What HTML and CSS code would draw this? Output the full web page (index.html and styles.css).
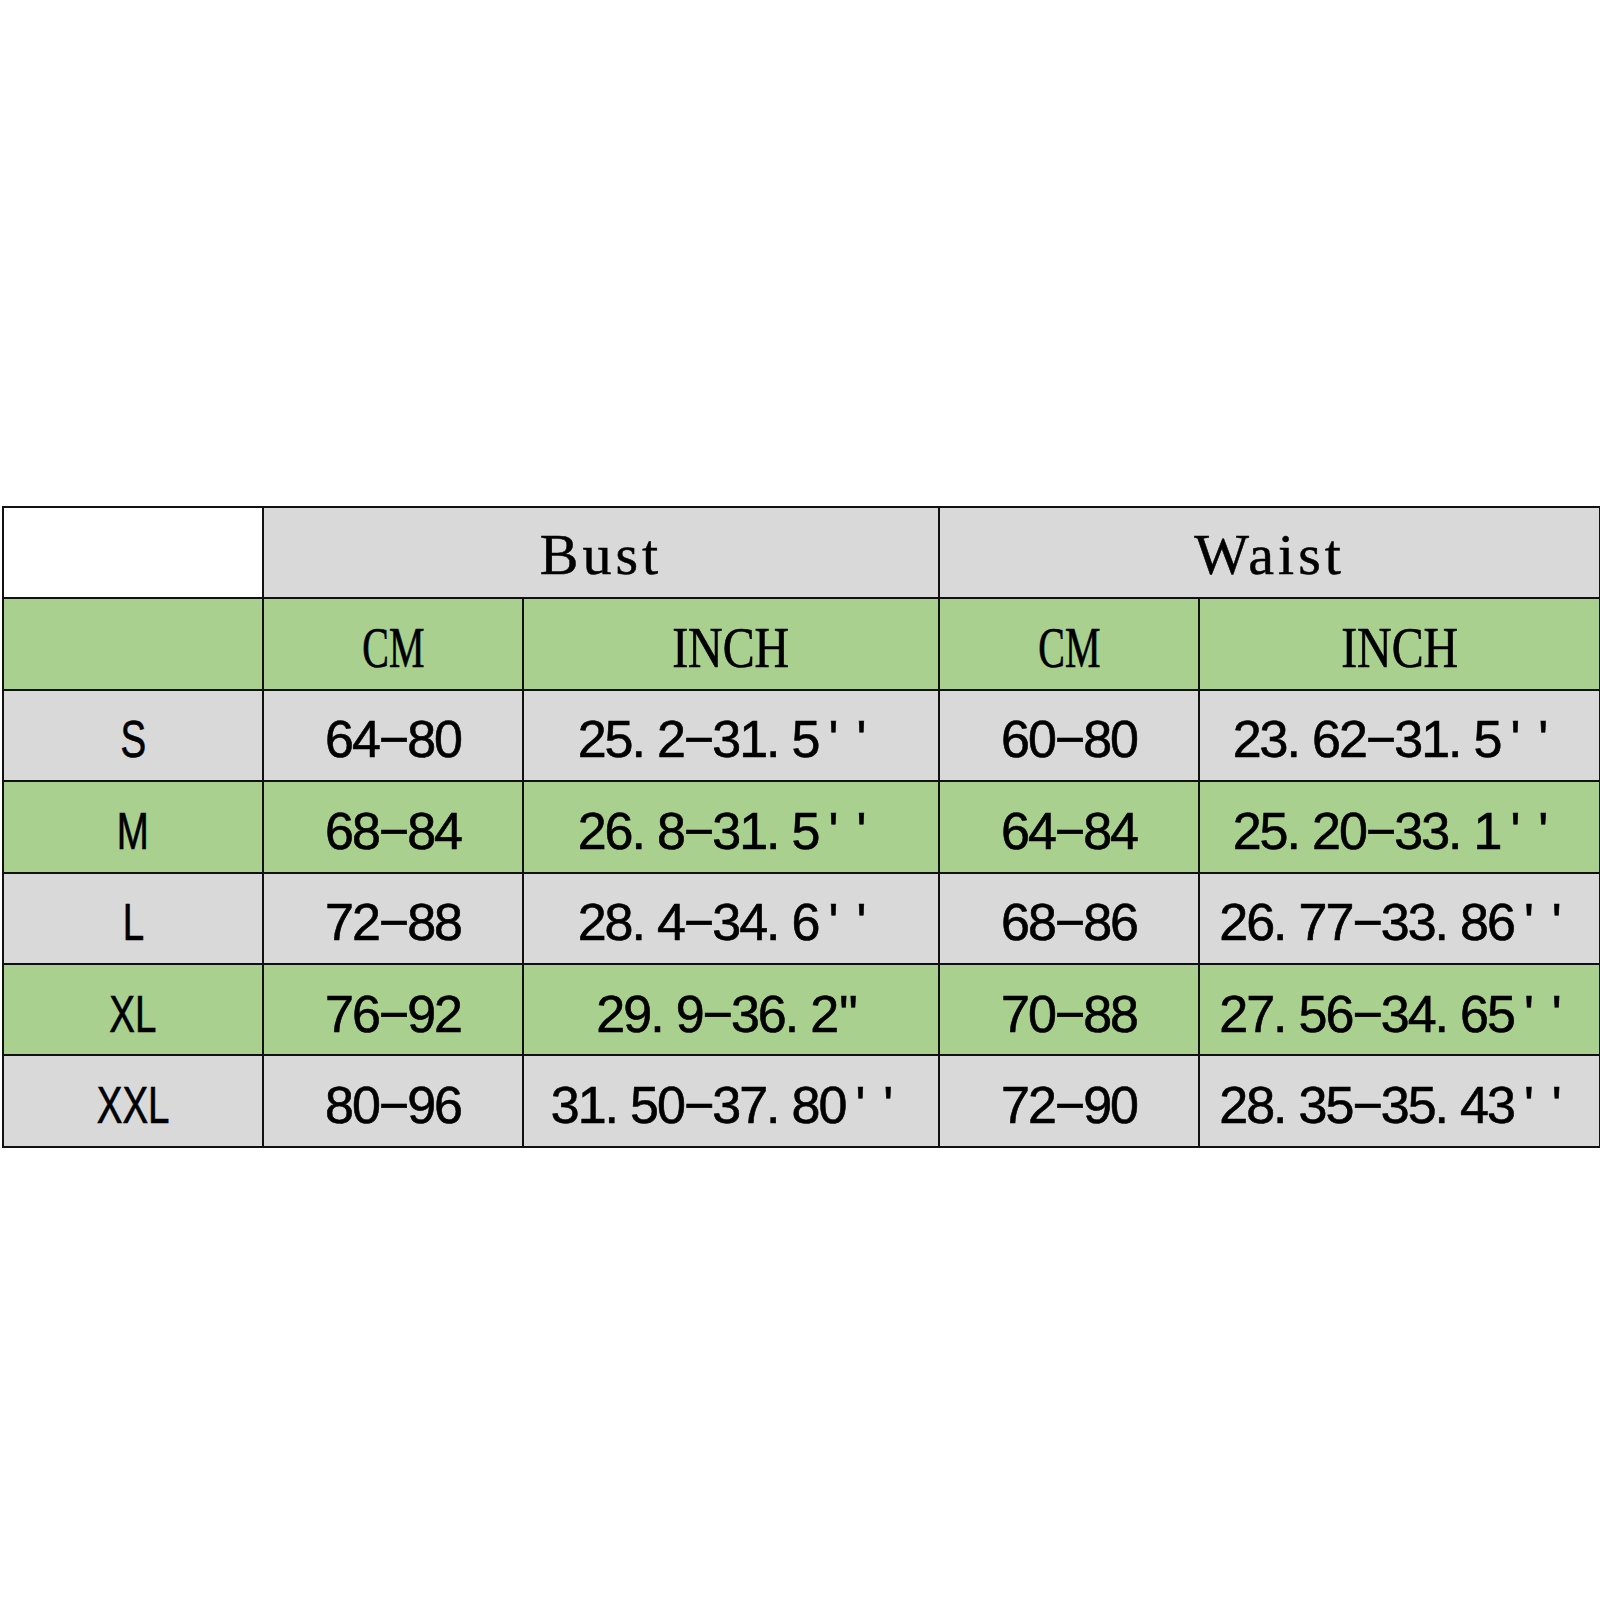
FILE: index.html
```html
<!DOCTYPE html>
<html>
<head>
<meta charset="utf-8">
<link rel="stylesheet" href="styles.css">
</head>
<body>
<div class="page">
<table class="chart">
  <colgroup>
    <col class="c-size"><col class="c-cm"><col class="c-inch1"><col class="c-cm"><col class="c-inch2">
  </colgroup>
  <tr class="head">
    <th class="blank"></th>
    <th colspan="2" class="grp">Bust</th>
    <th colspan="2" class="grp">Waist</th>
  </tr>
  <tr class="units green">
    <th></th>
    <th><span class="unit cm">CM</span></th>
    <th><span class="unit inch">INCH</span></th>
    <th><span class="unit cm">CM</span></th>
    <th><span class="unit inch">INCH</span></th>
  </tr>
  <tr class="grey">
    <td><span class="lbl">S</span></td>
    <td>64−80</td>
    <td>25<span class="d">.</span>2−31<span class="d">.</span>5<span class="q">''</span></td>
    <td>60−80</td>
    <td>23<span class="d">.</span>62−31<span class="d">.</span>5<span class="q">''</span></td>
  </tr>
  <tr class="green">
    <td><span class="lbl">M</span></td>
    <td>68−84</td>
    <td>26<span class="d">.</span>8−31<span class="d">.</span>5<span class="q">''</span></td>
    <td>64−84</td>
    <td>25<span class="d">.</span>20−33<span class="d">.</span>1<span class="q">''</span></td>
  </tr>
  <tr class="grey">
    <td><span class="lbl">L</span></td>
    <td>72−88</td>
    <td>28<span class="d">.</span>4−34<span class="d">.</span>6<span class="q">''</span></td>
    <td>68−86</td>
    <td>26<span class="d">.</span>77−33<span class="d">.</span>86<span class="q">''</span></td>
  </tr>
  <tr class="green">
    <td><span class="lbl">XL</span></td>
    <td>76−92</td>
    <td>29<span class="d">.</span>9−36<span class="d">.</span>2<span class="dq">"</span></td>
    <td>70−88</td>
    <td>27<span class="d">.</span>56−34<span class="d">.</span>65<span class="q">''</span></td>
  </tr>
  <tr class="grey">
    <td><span class="lbl">XXL</span></td>
    <td>80−96</td>
    <td>31<span class="d">.</span>50−37<span class="d">.</span>80<span class="q">''</span></td>
    <td>72−90</td>
    <td>28<span class="d">.</span>35−35<span class="d">.</span>43<span class="q">''</span></td>
  </tr>
</table>
</div>
</body>
</html>
```

FILE: styles.css
```css
html, body {
  margin: 0;
  padding: 0;
  background: #ffffff;
}
.page {
  padding: 506px 0 0 2px;
}
.chart {
  border-collapse: collapse;
  table-layout: fixed;
  width: 1597px;
}
.c-size { width: 260px; }
.c-cm { width: 260px; }
.c-inch1 { width: 416px; }
.c-inch2 { width: 401px; }
.chart th, .chart td {
  border: 2px solid #111;
  height: 85.4px;
  padding: 4px 0 0 0;
  text-align: center;
  vertical-align: middle;
  color: #000;
  overflow: hidden;
  white-space: nowrap;
}
.chart td {
  height: 81.4px;
  padding-top: 8px;
  font-family: "Liberation Sans", Arial, sans-serif;
  font-size: 52px;
  letter-spacing: -2px;
  font-weight: normal;
  -webkit-text-stroke: 0.6px #000;
}
.head th { background: #d9d9d9; }
.head th.blank { background: #ffffff; }
.grp {
  font-family: "Liberation Serif", "Times New Roman", serif;
  font-size: 58px;
  font-weight: normal;
  letter-spacing: 4px;
  -webkit-text-stroke: 0.5px #000;
}
.green th, .green td { background: #a9d08e; }
.grey th, .grey td { background: #d9d9d9; }
.units th {
  height: 82.4px;
  padding-top: 7px;
  font-family: "Liberation Serif", "Times New Roman", serif;
  font-size: 57px;
  font-weight: normal;
  -webkit-text-stroke: 0.7px #000;
}
.unit {
  display: inline-block;
}
.unit.inch { transform: scaleX(0.84); }
.unit.cm { transform: scaleX(0.7); }
.lbl {
  display: inline-block;
  transform: scaleX(0.74);
  letter-spacing: 0;
  -webkit-text-stroke: 0.7px #000;
}
.d { margin-right: 13px; }
.q { letter-spacing: 18px; margin-left: 10px; }
.dq { margin-right: 10px; margin-left: 2px; }
```
